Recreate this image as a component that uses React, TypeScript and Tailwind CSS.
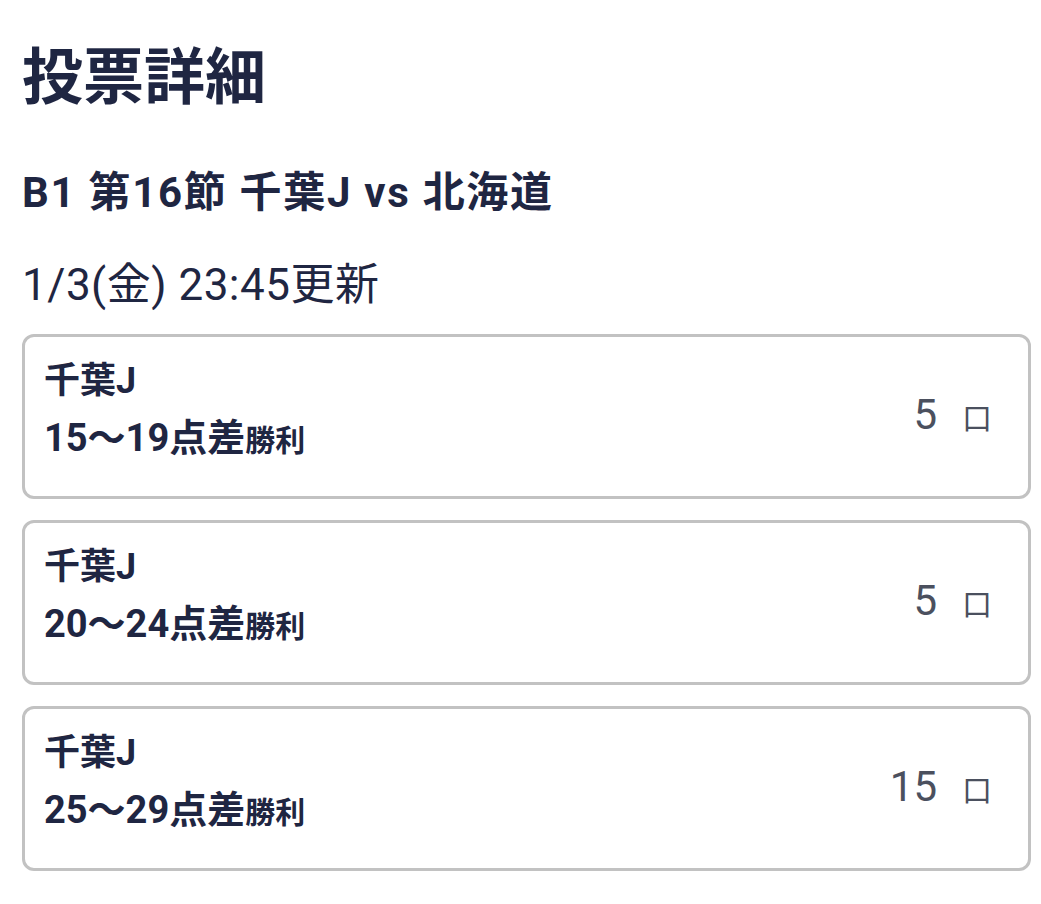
const votes = [
  { team: '千葉J', range: '15〜19', count: 5 },
  { team: '千葉J', range: '20〜24', count: 5 },
  { team: '千葉J', range: '25〜29', count: 15 },
]

export default function App() {
  return (
    <div
      className="min-h-screen bg-white text-[#1f2642] pt-[48px] pl-[22px] pr-[10px]"
      style={{ fontFamily: 'Roboto, "Noto Sans CJK JP", sans-serif' }}
    >
      <h1 className="h-[61px] text-[61px] leading-[61px] font-bold">投票詳細</h1>
      <h2 className="mt-[63px] h-[42px] text-[42px] leading-[42px] font-bold tracking-[1.7px] whitespace-nowrap">
        B1 第16節 千葉J vs 北海道
      </h2>
      <p className="mt-[49px] h-[44px] text-[44px] leading-[44px] tracking-[0.5px]">1/3(金) 23:45更新</p>

      <div className="mt-[27px] flex flex-col gap-[21px]">
        {votes.map((v) => (
          <div
            key={v.range}
            className="h-[165px] flex items-center justify-between border-[3px] border-[#c2c2c2] rounded-[12px] pl-[19px] pr-[36px]"
          >
            <div className="self-stretch pt-[24px]">
              <div className="h-[40px] text-[36px] leading-[40px] font-bold">{v.team}</div>
              <div className="mt-[15px] h-[44px] text-[38px] leading-[44px] font-bold whitespace-nowrap">
                {v.range}点差<span className="text-[30px]">勝利</span>
              </div>
            </div>
            <div className="flex items-baseline text-[#4b505e]">
              <span className="text-[42px] leading-[50px]">{v.count}</span>
              <span className="ml-[25px] text-[30px] leading-[50px]">口</span>
            </div>
          </div>
        ))}
      </div>
    </div>
  )
}
